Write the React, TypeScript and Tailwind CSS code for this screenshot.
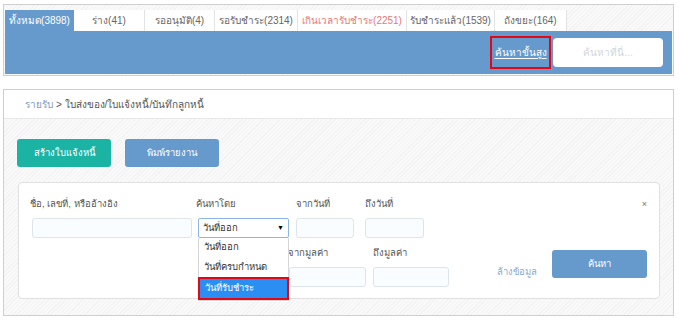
const tabs = [
  { label: 'ทั้งหมด(3898)', w: 'w-[69px]', active: true },
  { label: 'ร่าง(41)', w: 'w-[71px]' },
  { label: 'รออนุมัติ(4)', w: 'w-[70px]' },
  { label: 'รอรับชำระ(2314)', w: 'w-[83px]' },
  { label: 'เกินเวลารับชำระ(2251)', w: 'w-[109px]', red: true },
  { label: 'รับชำระแล้ว(1539)', w: 'w-[88px]' },
  { label: 'ถังขยะ(164)', w: 'w-[72px]' },
];

const stripes =
  'bg-[repeating-linear-gradient(135deg,#f3f3f3_0px,#f3f3f3_1px,#f9f9f9_1px,#f9f9f9_3px)]';

const inputBox = 'mt-[7px] h-[20px] shrink-0 rounded-[3px] border border-[#dde5ea] bg-[#fafdff]';
const labelText = 'h-[15px] text-[9.5px] leading-[15px] text-[#555] whitespace-nowrap';

export default function App() {
  return (
    <div className="w-[679px] h-[320px] overflow-hidden bg-white pt-[4px] pl-[3px] font-['Liberation_Sans','Noto_Sans',sans-serif]">
      {/* top tab panel */}
      <div className={`w-[671px] h-[72px] border border-[#cfcfcf] px-[1px] pt-[5px] pb-[1px] flex flex-col ${stripes}`}>
        <div className="flex h-[21px]">
          {tabs.map((t) => (
            <div
              key={t.label}
              className={`${t.w} h-full shrink-0 flex items-center justify-center text-[10px] whitespace-nowrap ${
                t.active
                  ? 'bg-[#6699cc] text-white'
                  : t.red
                  ? 'bg-white text-[#e8777a] border-r border-[#e3e3e3]'
                  : 'bg-white text-[#666] border-r border-[#e3e3e3]'
              }`}
            >
              {t.label}
            </div>
          ))}
        </div>
        <div className="h-[43px] bg-[#6699cc] flex items-center justify-end pr-[9px]">
          <div className="w-[61px] h-[33px] border-2 border-[#e30613] flex items-center justify-center">
            <span className="text-[10px] text-white underline underline-offset-2">ค้นหาขั้นสูง</span>
          </div>
          <div className="ml-[2px] w-[110px] h-[29px] rounded-[4px] bg-white flex items-center justify-center text-[10px] text-[#cfd6dd]">
            ค้นหาที่นี่...
          </div>
        </div>
      </div>

      {/* list page panel */}
      <div className="mt-[13px] w-[671px] h-[227px] border border-[#cfcfcf] flex flex-col">
        <div className="h-[29px] shrink-0 bg-white border-b border-[#e8e8e8] pl-[21px] flex items-center text-[10px]">
          <span className="text-[#7e9cc4]">รายรับ</span>
          <span className="text-[#555] ml-[3px]">&gt; ใบส่งของ/ใบแจ้งหนี้/บันทึกลูกหนี้</span>
        </div>

        <div className={`flex-1 pl-[13px] pt-[20px] ${stripes}`}>
          <div className="flex gap-[14px]">
            <button className="w-[94px] h-[28px] rounded-[3px] bg-[#1bb3a4] text-white text-[9.5px]">
              สร้างใบแจ้งหนี้
            </button>
            <button className="w-[94px] h-[28px] rounded-[3px] bg-[#6699cc] text-white text-[9.5px]">
              พิมพ์รายงาน
            </button>
          </div>

          {/* search card */}
          <div className="mt-[15px] ml-[1px] w-[642px] h-[117px] rounded-[4px] border border-[#e0e0e0] bg-white pl-[11px] pr-[10px] pt-[13px]">
            <div className="flex items-start">
              <div className="flex flex-col shrink-0 w-[166px]">
                <div className={labelText}>ชื่อ, เลขที่, หรืออ้างอิง</div>
                <div className={`${inputBox} ml-[2px] w-[160px]`} />
              </div>

              <div className="flex flex-col shrink-0 w-[100px]">
                <div className={labelText}>ค้นหาโดย</div>
                <div className="relative mt-[7px] ml-[2px] w-[91px]">
                  <div className="h-[20px] rounded-[2px] border border-[#8db6e6] bg-white flex items-center justify-between pl-[4px] pr-[4px] text-[9.5px] text-[#333]">
                    <span>วันที่ออก</span>
                    <span className="text-[7px] text-black">▼</span>
                  </div>
                  <div className="absolute left-0 top-full w-[91px] bg-white border border-[#d6d6d6] border-t-0 z-10">
                    <div className="h-[19px] flex items-center pl-[5px] text-[9.5px] text-[#333]">วันที่ออก</div>
                    <div className="h-[20px] flex items-center pl-[5px] text-[9.5px] text-[#333]">วันที่ครบกำหนด</div>
                    <div className="h-[23px] -mx-[1px] border-2 border-[#e30613] bg-[#2b8ef2] flex items-center pl-[5px] text-[9.5px] text-white">
                      วันที่รับชำระ
                    </div>
                  </div>
                </div>
              </div>

              <div className="flex flex-col shrink-0 w-[69px]">
                <div className={labelText}>จากวันที่</div>
                <div className={`${inputBox} w-[58px]`} />
              </div>
              <div className="flex flex-col shrink-0 w-[70px]">
                <div className={labelText}>ถึงวันที่</div>
                <div className={`${inputBox} w-[59px]`} />
              </div>

              <span className="ml-auto mr-[2px] mt-[2px] text-[9px] text-[#777]">×</span>
            </div>

            <div className="mt-[7px] flex items-start pl-[258px]">
              <div className="flex flex-col shrink-0 w-[85px]">
                <div className={labelText}>จากมูลค่า</div>
                <div className={`${inputBox} ml-[1px] w-[77px]`} />
              </div>
              <div className="flex flex-col shrink-0 w-[76px]">
                <div className={labelText}>ถึงมูลค่า</div>
                <div className={`${inputBox} w-[76px]`} />
              </div>
              <span className="ml-[48px] mt-[20px] w-[55px] shrink-0 text-[9.5px] text-[#8ea8cb]">ล้างข้อมูล</span>
              <button className="mt-[5px] w-[95px] h-[28px] shrink-0 rounded-[3px] bg-[#6699cc] text-white text-[9.5px]">
                ค้นหา
              </button>
            </div>
          </div>
        </div>
      </div>
    </div>
  );
}
